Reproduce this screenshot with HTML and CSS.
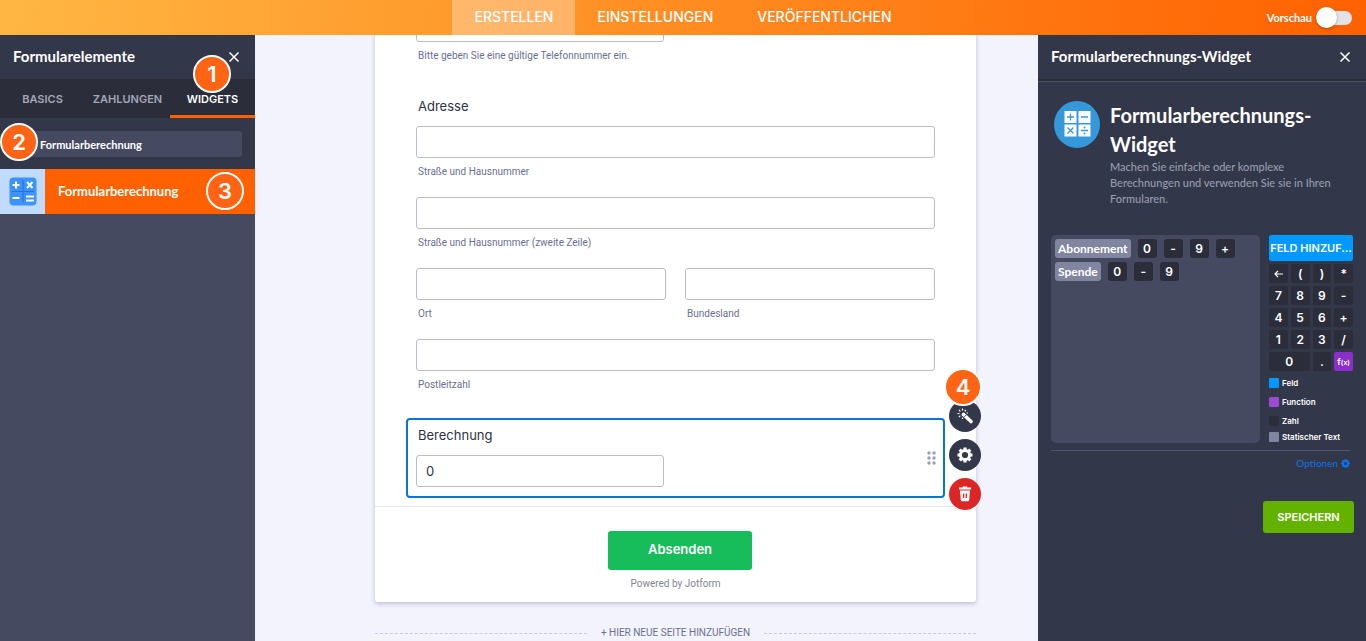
FILE: index.html
```
<!DOCTYPE html>
<html lang="de">
<head>
    <meta charset="UTF-8">
    <meta name="viewport" content="width=device-width, initial-scale=1">
    <title>Formular erstellen</title>
    <link rel="stylesheet" href="styles.css">
</head>
<body>
    <header class="topbar">
        <nav class="topnav">
            <a class="active" href="#erstellen">ERSTELLEN</a>
            <a href="#einstellungen">EINSTELLUNGEN</a>
            <a href="#veroeffentlichen">VERÖFFENTLICHEN</a>
        </nav>
        <label class="preview">Vorschau <input type="checkbox" class="switch"></label>
    </header>

    <div class="workspace">
        <aside class="elements">
            <div class="panelHead">
                <h2>Formularelemente</h2>
                <button class="close" aria-label="Schließen">
                    <svg width="12" height="12" viewBox="0 0 12 12"><path d="M1.5 1.5l9 9M10.5 1.5l-9 9"/></svg>
                </button>
            </div>
            <div class="tabs">
                <button>BASICS</button>
                <button>ZAHLUNGEN</button>
                <button class="active">WIDGETS</button>
                <span class="badge badge1">1</span>
            </div>
            <div class="search">
                <input type="text" value="Formularberechnung" aria-label="Widgets suchen">
                <span class="badge badge2">2</span>
            </div>
            <button class="widget">
                <span class="widgetIcon">
                    <svg width="28" height="29" viewBox="0 0 28 29">
                        <rect x="0.5" y="0.5" width="27" height="28" rx="4" fill="#3b93fb"/>
                        <path d="M14 3v22M3 14.5h22" stroke="#2072d8" stroke-width="1"/>
                        <path d="M3.500 8h7M7 4.500v7M18 5l5.500 6M23.500 5l-5.500 6M3.500 21h7M17 19.500h8M17 23.500h8" stroke="#fff" stroke-width="2" fill="none"/>
                    </svg>
                </span>
                <span class="widgetName">Formularberechnung</span>
                <span class="badge badge3">3</span>
            </button>
        </aside>

        <main class="canvas">
            <form class="card">
                <div class="fields">
                    <div class="field">
                        <input class="half" type="tel" id="telefon">
                        <label class="sub" for="telefon">Bitte geben Sie eine gültige Telefonnummer ein.</label>
                    </div>
                    <h3 class="question">Adresse</h3>
                    <div class="address">
                        <div class="field wide">
                            <input type="text" id="strasse">
                            <label class="sub" for="strasse">Straße und Hausnummer</label>
                        </div>
                        <div class="field wide">
                            <input type="text" id="strasse2">
                            <label class="sub" for="strasse2">Straße und Hausnummer (zweite Zeile)</label>
                        </div>
                        <div class="field">
                            <input type="text" id="ort">
                            <label class="sub" for="ort">Ort</label>
                        </div>
                        <div class="field">
                            <input type="text" id="land">
                            <label class="sub" for="land">Bundesland</label>
                        </div>
                        <div class="field wide">
                            <input type="text" id="plz">
                            <label class="sub" for="plz">Postleitzahl</label>
                        </div>
                    </div>
                    <div class="selected">
                        <label class="question" for="berechnung">Berechnung</label>
                        <div class="field">
                            <input class="half" type="text" id="berechnung" value="0">
                        </div>
                        <svg class="grip" width="9" height="14" viewBox="0 0 9 14" fill="#9a9fb5">
                            <circle cx="2" cy="2" r="1.700"/><circle cx="7" cy="2" r="1.700"/>
                            <circle cx="2" cy="7" r="1.700"/><circle cx="7" cy="7" r="1.700"/>
                            <circle cx="2" cy="12" r="1.700"/><circle cx="7" cy="12" r="1.700"/>
                        </svg>
                        <div class="tools">
                            <button type="button" aria-label="Assistent">
                                <svg width="16" height="16" viewBox="0 0 16 16"><path d="M6.500 6.500l7.500 7" stroke="#fff" stroke-width="3.600" stroke-linecap="round"/><path d="M5.500 0.500v2M2 2l1.300 1.300M0.500 5.500h2M2 9l1.300-1.300M9 2L7.700 3.300M5.500 9.500v1.500M9.500 5h1.500" stroke="#fff" stroke-width="1.200"/><path d="M6.800 9.300l2.600-2.600" stroke="#33374a" stroke-width="0.800"/></svg>
                            </button>
                            <button type="button" aria-label="Einstellungen">
                                <svg width="16" height="16" viewBox="0 0 16 16"><path d="M8 0.500v15M0.500 8h15M2.700 2.700l10.600 10.600M13.300 2.700L2.700 13.300" stroke="#fff" stroke-width="3.200"/><circle cx="8" cy="8" r="4.600" fill="#33374a" stroke="#fff" stroke-width="3"/></svg>
                            </button>
                            <button type="button" class="delete" aria-label="Löschen">
                                <svg width="14" height="16" viewBox="0 0 14 16"><path d="M1 1.500h3.500L5 .5h4l.5 1H13v2H1z" fill="#fff"/><path d="M2 4.500h10l-.8 9.500q-.1 1.200-1.200 1.200H4q-1.100 0-1.200-1.200z" fill="#fff"/><path d="M5.700 7.500v4.500M8.300 7.500v4.500" stroke="#dc2626" stroke-width="1.300"/></svg>
                            </button>
                            <span class="badge badge4">4</span>
                        </div>
                    </div>
                </div>
                <div class="submitRow">
                    <button class="submit" type="submit">Absenden</button>
                    <p class="powered">Powered by Jotform</p>
                </div>
            </form>
            <div class="newPage"><button>+ HIER NEUE SEITE HINZUFÜGEN</button></div>
        </main>

        <aside class="settings">
            <div class="panelHead">
                <h2>Formularberechnungs-Widget</h2>
                <button class="close" aria-label="Schließen">
                    <svg width="12" height="12" viewBox="0 0 12 12"><path d="M1.500 1.500l9 9M10.500 1.500l-9 9"/></svg>
                </button>
            </div>
            <div class="settingsBody">
                <div class="about">
                    <svg width="46" height="47" viewBox="0 0 46 47">
                        <ellipse cx="23" cy="23.500" rx="23" ry="23.500" fill="#3498db"/>
                        <path d="M10.500 10h12v12h-12zM24.500 10h12v12h-12zM10.500 23.500h12v12h-12zM24.500 23.500h12v12h-12z" fill="#fff"/>
                        <path d="M13 16h7M16.500 12.500v7M27 16h7M13.500 26.500l6 6M19.500 26.500l-6 6M27 29.500h7" stroke="#3498db" stroke-width="1.300"/>
                        <circle cx="30.500" cy="26.500" r="1" fill="#3498db"/><circle cx="30.500" cy="32.500" r="1" fill="#3498db"/>
                    </svg>
                    <div>
                        <h1>Formularberechnungs-Widget</h1>
                        <p>Machen Sie einfache oder komplexe Berechnungen und verwenden Sie sie in Ihren Formularen.</p>
                    </div>
                </div>
                <div class="calc">
                    <div class="formula">
                        <div class="tokens"><span class="text">Abonnement</span><span>0</span><span>-</span><span>9</span><span>+</span></div>
                        <div class="tokens"><span class="text">Spende</span><span>0</span><span>-</span><span>9</span></div>
                    </div>
                    <div class="side">
                        <button class="addField">FELD HINZUF...</button>
                        <div class="keys">
                            <button aria-label="Zurück"><svg width="9" height="8" viewBox="0 0 9 8"><path d="M9 4H1M4 1L1 4l3 3" stroke="#fff" stroke-width="1.200" fill="none"/></svg></button>
                            <button>(</button><button>)</button><button>*</button>
                            <button>7</button><button>8</button><button>9</button><button>-</button>
                            <button>4</button><button>5</button><button>6</button><button>+</button>
                            <button>1</button><button>2</button><button>3</button><button>/</button>
                            <button class="zero">0</button><button>.</button><button class="fx">f<small>(x)</small></button>
                        </div>
                        <ul class="legend">
                            <li class="lField">Feld</li>
                            <li class="lFunction">Function</li>
                            <li class="lNumber">Zahl</li>
                            <li class="lText">Statischer Text</li>
                        </ul>
                    </div>
                </div>
                <div class="options">
                    <a href="#optionen">Optionen
                        <svg width="9" height="9" viewBox="0 0 16 16"><path d="M8 0v16M0 8h16M2.400 2.400l11.200 11.200M13.600 2.400L2.400 13.600" stroke="#0a74e8" stroke-width="3"/><circle cx="8" cy="8" r="4.500" fill="#33374a" stroke="#0a74e8" stroke-width="3.500"/></svg>
                    </a>
                </div>
                <button class="save">SPEICHERN</button>
            </div>
        </aside>
    </div>
</body>
</html>
```
FILE: styles.css
```
:root {
    --navy: #33374a;
    --navyDark: #2b2d3b;
    --navyLight: #454a60;
    --orange: #ff6100;
    --line: #b8bdc9;
    --round: Lato, "Liberation Sans", sans-serif;
    --small: Roboto, "Liberation Sans", sans-serif;
}
* { box-sizing: border-box; }
html, body { height: 100%; margin: 0; }
body {
    display: flex;
    flex-direction: column;
    overflow: hidden;
    background: #f3f3fe;
    color: #2c3345;
    font-family: Inter, "Liberation Sans", sans-serif;
}
h1, h2, h3, p, ul { margin: 0; padding: 0; }
button {
    padding: 0;
    border: none;
    color: #fff;
    font-family: inherit;
    cursor: pointer;
}
a { text-decoration: none; }
svg { display: block; }

/* top bar */
.topbar {
    display: grid;
    grid-template-columns: 1fr auto 1fr;
    flex: none;
    height: 35px;
    background: linear-gradient(98deg, #ffb743 0%, var(--orange) 100%);
}
.topnav { grid-column: 2; display: flex; }
.topnav a {
    height: 35px;
    padding: 0 22px;
    color: #fff;
    font-size: 14px;
    font-weight: 500;
    line-height: 34px;
}
.topnav .active { background: rgba(255,255,255,0.3); }
.preview {
    display: flex;
    align-items: center;
    justify-content: flex-end;
    gap: 5px;
    padding-right: 14px;
    color: #fff;
    font-family: var(--round);
    font-size: 11px;
    font-weight: 700;
}
.switch {
    appearance: none;
    position: relative;
    width: 35px;
    height: 14px;
    margin: 0;
    border-radius: 7px;
    background: #e2e3e9;
}
.switch::before {
    content: "";
    position: absolute;
    left: -1px;
    top: -4px;
    width: 21px;
    height: 21px;
    border-radius: 50%;
    background: #fff;
    box-shadow: 0 1px 3px rgba(0,0,0,0.3);
}

.workspace { display: flex; flex: 1; min-height: 0; }

.panelHead {
    display: flex;
    align-items: center;
    justify-content: space-between;
    height: 44px;
    padding: 0 15px 0 13px;
    background: var(--navy);
}
.panelHead h2 {
    padding-bottom: 2px;
    color: #fff;
    font-family: var(--round);
    font-size: 15px;
    font-weight: 700;
}
.close { background: none; }
.close path { stroke: #fff; stroke-width: 1.5; }

.badge {
    position: absolute;
    width: 38px;
    height: 38px;
    border: 2px solid #fff;
    border-radius: 50%;
    background: #ff6414;
    color: #fff;
    font-size: 22px;
    font-weight: 600;
    line-height: 34px;
    text-align: center;
}

/* left panel */
.elements { flex: none; width: 255px; background: var(--navyLight); }
.tabs {
    position: relative;
    display: flex;
    height: 39px;
    background: var(--navyDark);
}
.tabs button {
    flex: 1;
    padding-top: 3px;
    border-bottom: 3px solid transparent;
    background: none;
    color: #a3a6b5;
    font-size: 11px;
    font-weight: 600;
}
.tabs .active { border-color: var(--orange); color: #fff; }
.badge1 { left: 193px; top: -24px; }
.search {
    position: relative;
    padding: 13px 13px 12px 19px;
    background: var(--navy);
}
.search input {
    display: block;
    width: 100%;
    height: 26px;
    padding: 0 0 0 21px;
    border: none;
    border-radius: 3px;
    background: var(--navyLight);
    color: #fff;
    font-family: var(--round);
    font-size: 11px;
    font-weight: 700;
}
.badge2 { left: 0; top: 5px; }
.widget {
    position: relative;
    display: flex;
    align-items: center;
    width: 100%;
    height: 45px;
    background: var(--orange);
    font-family: var(--round);
    font-size: 13px;
    font-weight: 700;
}
.widgetIcon {
    display: grid;
    place-items: center;
    width: 45px;
    height: 45px;
    background: #c1daff;
}
.widgetName { padding: 0 0 2px 13px; }
.badge3 { right: 11px; top: 3px; font-family: Inter, sans-serif; }

/* form canvas, scrolled part-way down */
.canvas {
    flex: 1;
    min-width: 0;
    overflow: hidden;
    padding: 0 62px 0 120px;
}
.card {
    margin-top: -25px;
    border-radius: 3px;
    background: #fff;
    box-shadow: 0 2px 4px rgba(84,95,150,0.35);
}
.fields { padding: 0 41px 8px; }
.field input {
    display: block;
    width: 100%;
    height: 32px;
    padding: 0 9px;
    border: 1px solid var(--line);
    border-radius: 3px;
    background: #fff;
    color: #2c3345;
    font-family: inherit;
    font-size: 13px;
}
.field .half { width: 248px; }
.sub {
    display: block;
    margin-top: 7px;
    padding-left: 2px;
    color: #6a6f91;
    font-family: var(--small);
    font-size: 10px;
    line-height: 14px;
}
.question {
    display: block;
    padding-left: 2px;
    font-size: 13px;
    font-weight: 400;
    line-height: 20px;
}
h3.question { margin: 33px 0 10px; }
.address {
    display: grid;
    grid-template-columns: 1fr 1fr;
    gap: 18px 19px;
}
.wide { grid-column: span 2; }
.selected {
    position: relative;
    margin: 26px -10px 0;
    padding: 5px 8px 9px;
    border: 2px solid #0a74d8;
    border-radius: 4px;
}
.selected .question { margin-bottom: 10px; }
.grip { position: absolute; right: 7px; top: 31px; }
.tools {
    position: absolute;
    left: 100%;
    top: -20px;
    display: flex;
    flex-direction: column;
    gap: 7px;
    margin-left: 6px;
}
.tools button {
    display: grid;
    place-items: center;
    width: 32px;
    height: 32px;
    border-radius: 50%;
    background: var(--navy);
}
.tools .delete { background: #dc2626; }
.badge4 { left: -5px; top: -32px; }
.submitRow {
    padding: 24px 0 11px;
    border-top: 1px solid #e3e5f0;
    text-align: center;
}
.submit {
    width: 144px;
    height: 39px;
    margin-left: 9px;
    padding-bottom: 3px;
    border-radius: 3px;
    background: #18bd5b;
    font-size: 13px;
    font-weight: 600;
}
.powered {
    margin-top: 7px;
    color: #82848f;
    font-family: var(--small);
    font-size: 10px;
    line-height: 14px;
}
.newPage {
    display: flex;
    align-items: center;
    gap: 14px;
    margin-top: 24px;
}
.newPage::before, .newPage::after {
    content: "";
    flex: 1;
    border-top: 1px dashed #c8c9e6;
}
.newPage button {
    background: none;
    color: #6a6f91;
    font-family: var(--small);
    font-size: 10px;
    line-height: 14px;
}

/* right panel */
.settings { flex: none; width: 328px; background: var(--navy); }
.settings .panelHead {
    height: 47px;
    padding-bottom: 3px;
    border-bottom: 1px solid #505566;
    box-shadow: inset 0 -2px var(--navyDark);
}
.settingsBody { padding: 19px 12px 0 13px; }
.about {
    display: flex;
    align-items: flex-start;
    gap: 10px;
    padding-left: 3px;
    font-family: var(--round);
}
.about svg { flex: none; }
.about h1 {
    color: #fff;
    font-size: 20px;
    font-weight: 700;
    line-height: 29px;
}
.about p {
    color: #989cad;
    font-size: 11px;
    font-weight: 500;
    line-height: 16px;
}
.calc {
    display: flex;
    gap: 9px;
    margin: 28px 1px 0 0;
}
.formula {
    flex: 1;
    height: 208px;
    padding: 4px;
    border-radius: 5px;
    background: var(--navyLight);
}
.tokens { display: flex; gap: 7px; margin-bottom: 4px; }
.tokens span {
    width: 19px;
    border-radius: 3px;
    background: var(--navyDark);
    color: #fff;
    font-size: 12px;
    font-weight: 600;
    line-height: 19px;
    text-align: center;
}
.tokens .text {
    width: auto;
    padding: 0 3px;
    background: #8186a0;
    font-family: var(--round);
    font-size: 12px;
    font-weight: 700;
}
.side { width: 84px; }
.addField {
    display: block;
    width: 100%;
    height: 26px;
    border-radius: 2px;
    background: #0099ff;
    font-size: 11px;
    font-weight: 600;
    white-space: nowrap;
}
.keys {
    display: grid;
    grid-template-columns: repeat(4, 1fr);
    gap: 3px;
    margin-top: 3px;
}
.keys button {
    display: grid;
    place-items: center;
    height: 19px;
    border-radius: 2px;
    background: var(--navyDark);
    font-size: 12px;
    font-weight: 600;
}
.keys .zero { grid-column: span 2; }
.keys .fx { display: block; background: #8a2fc9; font-size: 9px; }
.keys small { font-size: 7px; }
.legend { margin-top: 2px; list-style: none; }
.legend li {
    display: flex;
    align-items: center;
    gap: 3px;
    height: 19px;
    color: #fff;
    font-size: 8px;
    font-weight: 600;
    white-space: nowrap;
}
.legend li::before {
    content: "";
    width: 10px;
    height: 10px;
    border-radius: 1px;
}
.legend li:last-child { height: 14px; }
.lField::before { background: #0099ff; }
.lFunction::before { background: #9d4ad3; }
.lNumber::before { background: var(--navyDark); }
.lText::before { background: #8186a0; }
.options {
    display: flex;
    justify-content: flex-end;
    margin: 6px 4px 0 0;
    padding-top: 5px;
    border-top: 1px solid #4c5472;
}
.options a {
    display: flex;
    align-items: center;
    gap: 3px;
    color: #0a74e8;
    font-family: var(--round);
    font-size: 10px;
    line-height: 14px;
}
.save {
    display: block;
    width: 91px;
    height: 32px;
    margin: 31px 0 0 auto;
    border-radius: 3px;
    background: #64b200;
    font-size: 11px;
    font-weight: 600;
}
```
